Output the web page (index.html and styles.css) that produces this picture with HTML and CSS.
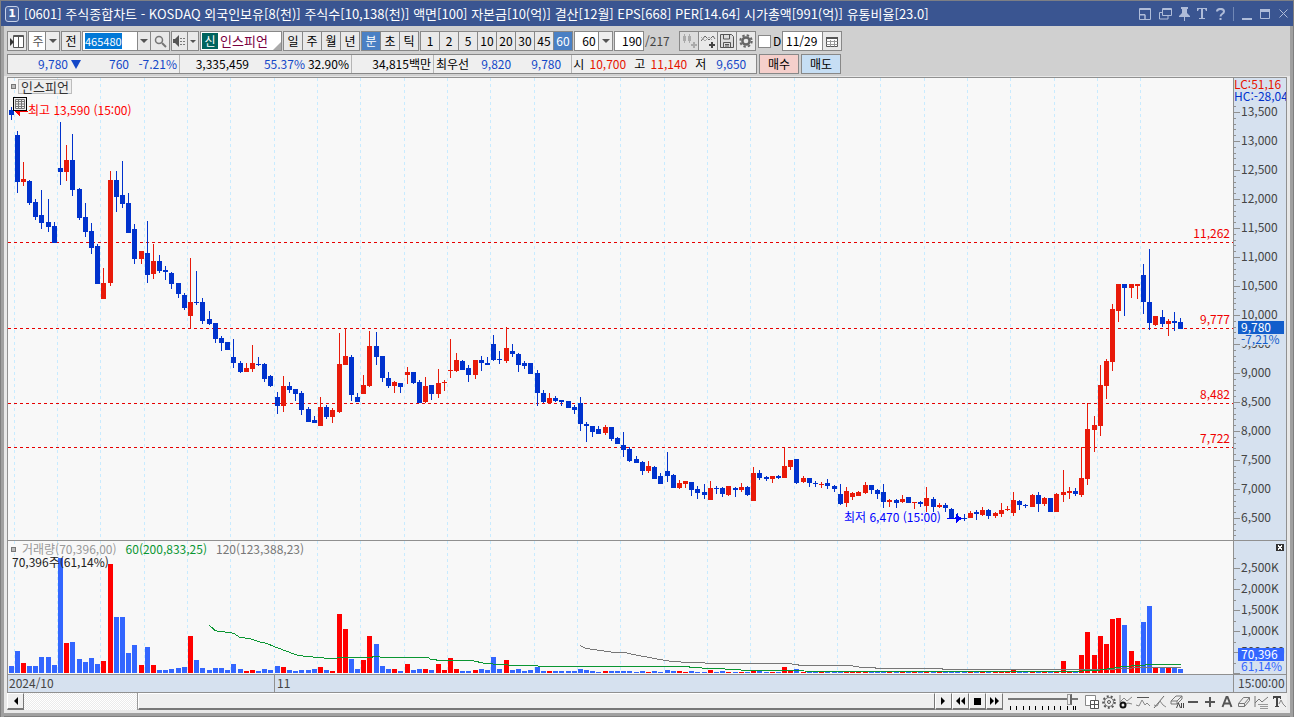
FILE: index.html
```html
<!DOCTYPE html>
<html lang="ko">
<head>
<meta charset="utf-8">
<title>[0601] 주식종합차트</title>
<link rel="stylesheet" href="styles.css">
</head>
<body>
<div class="window">
  <header class="titlebar">
    <span class="win-no">1</span>
    <h1 class="title">[0601] 주식종합차트 - KOSDAQ 외국인보유[8(천)] 주식수[10,138(천)] 액면[100] 자본금[10(억)] 결산[12월] EPS[668] PER[14.64] 시가총액[991(억)] 유통비율[23.0]</h1>
    <div class="win-tools">
      <button class="wt wide" aria-label="분할"><svg width="12" height="12"><path d="M.5 .5h11v11H.5zM0 1.500h12M1 6.500h5v5M6 11V7H1" fill="none" stroke="currentColor"/></svg></button>
      <button class="wt wide" aria-label="복제"><svg width="13" height="12"><path d="M3.500 .5h9v7h-9zM3 1.500h10M3 4.500H.5v6.500H9V8" fill="none" stroke="currentColor"/></svg></button>
      <button class="wt" aria-label="고정"><svg width="11" height="14"><path d="M2 0h7v2H8v4l3 3v1H6v4H5v-4H0V9l3-3V2H2z" fill="currentColor"/></svg></button>
      <button class="wt" aria-label="글꼴"><svg width="10" height="11"><path d="M0 0h10v3H9L8 1H6v9h2v1H2v-1h2V1H2L1 3H0z" fill="currentColor"/></svg></button>
      <button class="wt" aria-label="도움말"><svg width="9" height="12"><path d="M1 3.500C1 0 8 0 8 3.500C8 6 4.500 5.500 4.500 8.500M4.500 10v2" fill="none" stroke="currentColor" stroke-width="2"/></svg></button>
      <span class="wt-sep"></span>
      <button class="wt" aria-label="최소화"><svg width="10" height="12"><path d="M0 11h10" stroke="currentColor" stroke-width="2"/></svg></button>
      <button class="wt" aria-label="최대화"><svg width="10" height="10"><path d="M.5 .5h9v9h-9zM0 2h10" fill="none" stroke="currentColor"/><path d="M0 0h10v3H0z" fill="currentColor"/></svg></button>
      <button class="wt" aria-label="닫기"><svg width="9" height="9"><path d="M.5 .5l8 8M8.500 .5l-8 8" stroke="currentColor"/></svg></button>
    </div>
  </header>

  <div class="tools">
    <div class="row">
      <div class="grp"><button class="b w18" aria-label="목록"><svg width="14" height="13"><path d="M3.500 .5h10v12h-10z" fill="#fff" stroke="#555"/><path d="M3 1.500h11M8.500 2v10" stroke="#555"/><path d="M0 3l4 4-4 4z" fill="#333"/></svg></button></div>
      <div class="grp combo"><select class="sel kind" aria-label="종목구분"><option>주</option></select><span class="arr"><svg width="8" height="4"><path d="M0 0h8L4 4z"/></svg></span></div>
      <div class="grp"><button class="b w18">전</button></div>
      <div class="grp">
        <input class="code" id="code" aria-label="종목코드" value="465480">
        <button class="b w13" aria-label="최근 종목"><svg width="8" height="4"><path d="M0 0h8L4 4z" fill="#555"/></svg></button>
        <button class="b w18" aria-label="종목 검색"><svg width="13" height="13"><circle cx="5" cy="5" r="3.500" fill="none" stroke="#777" stroke-width="1.500"/><path d="M8 8l4 4" stroke="#777" stroke-width="2"/></svg></button>
      </div>
      <div class="grp">
        <button class="b w15" aria-label="음성"><svg width="13" height="12"><path d="M0 4h2l4-4v12L2 8H0z" fill="#555"/><path d="M8 3v1M8 6v1M8 9v1M11 3v1M11 6v1M11 9v1" stroke="#555" stroke-width="1.500"/></svg></button>
        <button class="b w10" aria-label="음성 설정"><svg width="6" height="3"><path d="M0 0h6L3 3z" fill="#555"/></svg></button>
      </div>
      <div class="grp stock"><span class="shin">신</span><span class="name">인스피언</span><svg class="corner" width="8" height="8"><path d="M8 0v8H0z" fill="#aaa"/></svg></div>
      <div class="grp"><button class="b w18">일</button><button class="b w18">주</button><button class="b w18">월</button><button class="b w18">년</button></div>
      <div class="grp"><button class="b w18 on">분</button><button class="b w18">초</button><button class="b w18">틱</button></div>
      <div class="grp"><button class="b w18">1</button><button class="b w18">2</button><button class="b w18">5</button><button class="b w18">10</button><button class="b w18">20</button><button class="b w18">30</button><button class="b w18">45</button><button class="b w18 on">60</button></div>
      <div class="grp combo"><select class="sel mins" aria-label="분 간격"><option>60</option></select><span class="arr"><svg width="8" height="4"><path d="M0 0h8L4 4z"/></svg></span></div>
      <div class="grp"><input class="count" aria-label="표시 봉 수" value="190"></div>
      <span class="total">/217</span>
      <div class="grp">
        <button class="b w18 off" aria-label="봉 추가"><svg width="15" height="14"><path d="M2.500 0v9M7.500 0v9" stroke="#aaa"/><path d="M1 2h3v5H1zM6 2h3v5H6z" fill="#aaa"/><path d="M9 11h6M12 8v6" stroke="#aaa" stroke-width="2"/></svg></button>
        <button class="b w18" aria-label="지표 추가"><svg width="15" height="14"><path d="M0 7l4-5 4 4 4-4 2 3" fill="none" stroke="#666"/><path d="M0 3l4 4 4-4 3 3" fill="none" stroke="#aaa"/><path d="M8 11h6M11 8v6" stroke="#444" stroke-width="2"/></svg></button>
        <button class="b w18" aria-label="저장"><svg width="14" height="14"><path d="M.5 .5h11l2 2v11H.5z" fill="#ddd" stroke="#555"/><path d="M3.500 1v4h6V1M3.500 13V8.500h7V13M5 10.500h4M5 12h4" fill="none" stroke="#555"/></svg></button>
        <button class="b w18" aria-label="설정"><svg width="14" height="14"><circle cx="7" cy="7" r="3.600" fill="none" stroke="#666" stroke-width="2.500"/><circle cx="7" cy="7" r="5.700" fill="none" stroke="#666" stroke-width="2" stroke-dasharray="2.400 2.077"/></svg></button>
      </div>
      <label class="dchk"><input type="checkbox">D</label>
      <div class="grp"><input class="date" aria-label="날짜" value="11/29"><button class="b w18" aria-label="달력"><svg width="12" height="11"><path d="M.5 1.500h11v9H.5z" fill="#fff" stroke="#555"/><path d="M0 2h12" stroke="#555" stroke-width="2"/><path d="M.5 5.500h11M.5 8.500h11M4.500 4v6.500M8.500 4v6.500" stroke="#999"/></svg></button></div>
    </div>
    <div class="row">
      <div class="quote">
        <div class="q"><span class="n w60 dn">9,780</span><svg class="tri" width="10" height="9"><path d="M0 0h10L5 9z" fill="#1448c8"/></svg><span class="n w48 dn">760</span><span class="n w48 dn">-7.21%</span></div>
        <div class="q"><span class="n w68 ">3,335,459</span><span class="n w56 dn">55.37%</span><span class="n w44">32.90%</span></div>
        <div class="q"><span class="n w78">34,815백만</span></div>
        <div class="q best"><span class="lab">최우선</span><span class="n w42 dn">9,820</span><span class="n w50 dn">9,780</span></div>
        <div class="q"><span>시</span><span class="n w42 up">10,700</span><span class="lab2">고</span><span class="n w42 up">11,140</span><span class="lab2">저</span><span class="n w40 dn">9,650</span></div>
      </div>
      <button class="order buy">매수</button>
      <button class="order sell">매도</button>
    </div>
  </div>

  <main class="chart">
    <section class="pane price">
      <svg class="plot" id="price" role="img" aria-label="인스피언 60분봉"></svg>
      <div class="tag"><i class="dot"></i><span class="tag-name">인스피언</span></div>
      <button class="grid-btn" aria-label="표 보기"><svg width="10" height="10"><path d="M.5 .5h9v9h-9zM.5 2.500h9M.5 5h9M.5 7.500h9M3.500 1v8M6.500 1v8" fill="none" stroke="#777"/></svg></button>
    </section>
    <svg class="axis" id="price-axis"></svg>
    <section class="pane volume">
      <svg class="plot" id="volume" role="img" aria-label="거래량"></svg>
      <div class="legend"><i class="dot"></i><span class="v0">거래량(70,396,00)</span><span class="v60">60(200,833,25)</span><span class="v120">120(123,388,23)</span></div>
      <div class="vnow">70,396주(61,14%)</div>
    </section>
    <div class="axis vol-axis"><svg class="plot" id="volume-axis"></svg><button class="pane-x" aria-label="닫기"><svg width="8" height="7"><path d="M2 1.500l4 4M6 1.500l-4 4" stroke="#fff"/></svg></button></div>
    <div class="dates"><span class="d1">2024/10</span><span class="d2">11</span></div>
    <div class="axis time">15:00:00</div>
  </main>

  <footer class="bottom">
    <div class="scroll">
      <button class="sb" aria-label="왼쪽"><svg width="5" height="8"><path d="M5 0v8L1 4z"/></svg></button>
      <div class="track"><div class="thumb"></div></div>
      <button class="sb" aria-label="오른쪽"><svg width="5" height="8"><path d="M0 0v8l4-4z"/></svg></button>
      <button class="sb" aria-label="뒤로"><svg width="9" height="8"><path d="M4 0v8L0 4zM9 0v8L5 4z"/></svg></button>
      <button class="sb" aria-label="정지"><svg width="7" height="7"><path d="M0 0h7v7H0z"/></svg></button>
      <button class="sb" aria-label="앞으로"><svg width="9" height="8"><path d="M0 0v8l4-4zM5 0v8l4-4z"/></svg></button>
    </div>
    <div class="speed"><input type="range" aria-label="속도" min="0" max="100" value="90"><svg width="70" height="4"><path d="M2.500 0v4M8.500 0v4M15.500 0v4M21.500 0v4M27.500 0v4M34.500 0v4M40.500 0v4M46.500 0v4M52.500 0v4M59.500 0v4M65.500 0v4M67.500 0v4" stroke="#000"/></svg></div>
    <div class="draw">
      <button class="di" aria-label="새 창"><svg width="14" height="14"><path d="M.5 .5h10v10h-10z" fill="#fff" stroke="#888"/><path d="M5.500 5.500h8v8h-8zM9.500 5.500v8M5.500 9.500h8" fill="#fff" stroke="#555"/></svg></button>
      <button class="di" aria-label="설정"><svg width="14" height="14"><circle cx="7" cy="7" r="4.500" fill="none" stroke="#777"/><circle cx="7" cy="7" r="5.800" fill="none" stroke="#555" stroke-width="2" stroke-dasharray="2 2.050"/><circle cx="7" cy="7" r="1.500" fill="none" stroke="#555"/></svg></button>
      <button class="di" aria-label="추세 설정"><svg width="14" height="14"><path d="M1 0v8M1 7l4-4 3 3 5-4M5 10l4-2 4 1" fill="none" stroke="#888"/><circle cx="4" cy="10" r="2.500" fill="none" stroke="#111" stroke-width="2"/></svg></button>
      <button class="di" aria-label="수평선"><svg width="14" height="14"><path d="M1 2.500h12" stroke="#555"/><path d="M0 10l3 1 3-6 3 5 2-2 3 3" fill="none" stroke="#888"/></svg></button>
      <button class="di" aria-label="추세선"><svg width="14" height="14"><path d="M1 13L11 1" stroke="#666"/><path d="M1 10l3 1 3-5 3 4 3 2" fill="none" stroke="#888"/></svg></button>
      <button class="di" aria-label="전체 지우기"><svg width="14" height="14"><path d="M1 9V6l5-5h6v3l-5 5z" fill="#eee" stroke="#777"/><path d="M1 6h6v3M7 6l5-5" fill="none" stroke="#777"/><path d="M6.500 13l2-5 2 5M11.500 8v5M13.500 8v5" fill="none" stroke="#444"/></svg></button>
      <button class="di" aria-label="축소"><svg width="14" height="14"><path d="M2 7h10" stroke="#555" stroke-width="2"/></svg></button>
      <button class="di" aria-label="확대"><svg width="14" height="14"><path d="M2 7h10M7 2v10" stroke="#555" stroke-width="2"/></svg></button>
      <button class="di" aria-label="글자"><svg width="14" height="14"><path d="M2.500 12L6.500 2h1l4 10M4 8.500h6" fill="none" stroke="#555" stroke-width="2"/></svg></button>
      <button class="di" aria-label="지우개"><svg width="14" height="14"><path d="M1.500 11.500v-3l5-6h6v3l-5 6zM1.500 8.500h6v3M7.500 8.500l5-6" fill="#eee" stroke="#777"/></svg></button>
      <button class="di" aria-label="차트 목록"><svg width="15" height="14"><path d="M1 1v11M1 8l4-4 3 3 6-5" fill="none" stroke="#777"/><path d="M4 9.500h10M6 11.500h8M6 13.500h8" stroke="#999"/></svg></button>
      <button class="di" aria-label="텍스트 표시"><svg width="14" height="14"><path d="M1 1h8v3H8V3H6v8h1v1H3v-1h1V3H2v1H1z" fill="#444"/><path d="M7 9l2-4 2 4 3 3" fill="none" stroke="#888"/></svg></button>
    </div>
  </footer>
</div>
<script src="chart.js"></script>
</body>
</html>
```
FILE: styles.css
```css
* { box-sizing: border-box; }
body {
  margin: 0;
  font: 12px/16px "Noto Sans CJK KR", "Liberation Sans", sans-serif;
  color: #000;
}
button, input, select { font: inherit; color: inherit; margin: 0; padding: 0; border: 0; border-radius: 0; }
svg { display: block; flex: none; }
.window {
  display: flex; flex-direction: column; height: 100vh;
  border-top: 1px solid #7d7f85; background: #e8e8e8;
  box-shadow: inset 1px 0 #7f7f7f, inset 4px 0 #a0a0a0, inset -1px 0 #7f7f7f, inset -4px 0 #a0a0a0, inset 0 -1px #7f7f7f, inset 0 -4px #a0a0a0;
  padding: 0 4px 7px;
  overflow: hidden;
}
.titlebar {
  display: flex; align-items: center; height: 25px; flex: none;
  margin: 0 -3px; padding: 0 1px 0 4px; background: #3a5591; color: #fff;
}
.win-no {
  width: 14px; height: 16px; border: 1px solid #c8d2e8; border-radius: 3px; background: #4b659e;
  font: bold 11px/14px "DejaVu Sans", sans-serif; text-align: center;
}
.title { margin: 0 0 0 5px; font-size: 13px; line-height: 16px; font-weight: 400; white-space: pre; flex: 1; overflow: hidden; }
.win-tools { display: flex; align-items: center; color: #afbcd9; }
.wt { display: flex; align-items: center; justify-content: center; width: 18px; height: 18px; background: none; }
.wt.wide { width: 20px; }
.wt-sep { width: 1px; height: 14px; margin: 0 4px; background: #7188b6; }

.tools { display: flex; flex-direction: column; gap: 3px; flex: none; background: #d0d0d0; padding: 5px 3px 2px; border-bottom: 1px solid #e6e6e6; }
.row { display: flex; gap: 1px; height: 20px; align-items: stretch; }
.grp { display: flex; border: 1px solid #888; background: #fff; position: relative; }
.grp > * + .b { border-left: 1px solid #888; box-sizing: content-box; }
.b { display: flex; align-items: center; justify-content: center; background: #e9e9e9; line-height: 16px; }
.w18 { width: 18px; } .w15 { width: 15px; } .w13 { width: 12px; } .w10 { width: 10px; }
.b.on { background: #4a80c4; color: #fff; }
.b.off { background: #dcdcdc; }
.sel { appearance: none; background: #fff; padding-right: 14px; text-align: center; }
.kind { width: 30px; padding-left: 2px; color: #555; }
.mins { width: 37px; padding-left: 5px; }
.arr {
  position: absolute; right: 0; top: 0; bottom: 0; width: 14px; pointer-events: none;
  display: flex; align-items: center; justify-content: center; border-left: 1px solid #888; background: #eee; fill: #555;
}
.code { width: 54px; padding-left: 2px; font-size: 11px; background: #fff; outline: 0; }
.code::selection { background: #0078d7; color: #fff; }
.stock { width: 82px; align-items: center; }
.shin { width: 16px; line-height: 16px; margin-left: 1px; background: #00645e; color: #fff; text-align: center; }
.name { margin-left: 2px; color: #7a0040; font-size: 13px; }
.corner { position: absolute; right: 0; bottom: 0; }
.count { width: 28px; padding-right: 1px; text-align: right; }
.total { width: 33px; line-height: 20px; color: #444; }
.dchk { display: flex; align-items: center; gap: 2px; width: 24px; padding-left: 1px; white-space: nowrap; }
.dchk input { appearance: none; width: 13px; height: 13px; border: 1px solid #888; background: #fff; flex: none; }
.date { width: 39px; padding-left: 3px; }

.quote { display: flex; border: 1px solid #888; background: #efefef; width: 750px; line-height: 18px; white-space: nowrap; }
.q { display: flex; align-items: center; padding-right: 2px; }
.q + .q { border-left: 1px solid #b5b5b5; padding-left: 1px; }
.n { text-align: right; }
.w60 { width: 60px; } .w48 { width: 48px; } .w68 { width: 68px; } .w56 { width: 56px; } .w44 { width: 44px; }
.w40 { width: 40px; } .w78 { width: 78px; } .w42 { width: 42px; } .w50 { width: 50px; }
.q.best { padding-right: 10px; }
.tri { margin-left: 3px; }
.lab { margin-left: 1px; }
.lab2 { margin-left: 8px; }
.dn { color: #1448c8; }
.up { color: #e61400; }
.order { width: 40px; border: 1px solid #888; margin-left: 1px; }
.buy { background: #f5cfcb; }
.sell { background: #c6def4; }

.chart {
  flex: 1; min-height: 0; margin: 0 3px;
  display: grid; grid-template-columns: 1fr 53px; grid-template-rows: 1fr 134px 18px;
  border: 1px solid #909090; background: #f8f8f8;
}
.pane { position: relative; min-width: 0; min-height: 0; overflow: hidden; }
.plot { width: 100%; height: 100%; position: absolute; inset: 0; shape-rendering: crispEdges; }
.plot text, .axis text { font-size: 12px; }
.volume, .vol-axis { border-top: 1px solid #909090; }
.axis { width: 100%; height: 100%; background: #d6e1ef; border-left: 1px solid #909090; position: relative; overflow: hidden; shape-rendering: crispEdges; }
.tag { position: absolute; left: 3px; top: 1px; display: flex; align-items: center; gap: 2px; }
.dot { width: 5px; height: 5px; border: 1px solid #777; background: #bbb; flex: none; }
.tag-name { width: 54px; height: 15px; line-height: 13px; border: 1px solid #bdbdbd; background: #eee; color: #333; text-align: center; font-size: 13px; }
.grid-btn { position: absolute; left: 5px; top: 19px; width: 14px; height: 14px; border: 1px solid #000; background: #eee; padding: 1px; }
.legend { position: absolute; left: 3px; top: 0; display: flex; align-items: center; gap: 9px; white-space: nowrap; }
.legend .v0 { margin-left: -3px; color: #999; }
.v60 { color: #0a9632; } .v120 { color: #777; }
.vnow { position: absolute; left: 4px; top: 13px; color: #222; }
.pane-x { position: absolute; right: 2px; top: 3px; background: #333; }
.dates, .time { border-top: 1px solid #909090; background: #d6e1ef; color: #444; line-height: 15px; }
.dates { display: flex; }
.d1 { width: 266px; padding-left: 1px; }
.d2 { border-left: 1px solid #909090; padding-left: 2px; }
.time { padding-left: 4px; white-space: nowrap; }

.bottom { display: flex; flex: none; height: 17px; margin: 0 3px; background: #efefef; }
.scroll { flex: 1; display: flex; min-width: 0; }
.sb {
  width: 17px; flex: none; display: flex; align-items: center; justify-content: center; background: #efefef;
  border: 1px solid #fff; border-right-color: #777; border-bottom: 2px solid #777;
}
.track { flex: 1; display: flex; background: repeating-conic-gradient(#fff 0 25%, #ebebeb 0 50%) 0 0 / 2px 2px; }
.thumb { margin-left: 12.5%; flex: 1; background: #efefef; border: 1px solid #fff; border-right-color: #777; border-bottom: 2px solid #777; box-shadow: -1px 0 #999; }
.speed { width: 77px; padding: 0 2px 0 5px; display: flex; flex-direction: column; }
.speed input { appearance: none; width: 70px; height: 13px; background: linear-gradient(#777, #777) 0 5px / 100% 2px no-repeat; }
.speed input::-webkit-slider-thumb { appearance: none; width: 5px; height: 11px; background: #eee; border: 1px solid #999; border-right: 2px solid #666; }
.draw { display: flex; align-items: center; justify-content: space-between; width: 207px; padding: 0 1px 0 5px; }
.di { background: none; }
```
FILE: chart.js
```js
// Each bar: direction, high, low, body top, body bottom (screen rows).
const BARS = `b107,120,110,115 b131,193,135,182 r162,186,179,182 b180,205,181,203 b199,220,202,217 b190,229,215,223 b199,232,222,227 b222,243,226,243 b122,185,168,172 r145,181,160,172
b134,196,160,190 b188,220,189,218 b203,237,217,232 b223,254,231,248 b244,284,246,284 r268,299,283,299 r171,286,180,283 b171,212,180,197 b161,208,195,204 b193,233,203,233
b224,264,229,259 r251,264,251,259 b221,283,253,275 r244,279,261,274 b255,273,261,271 b266,280,270,272 b272,289,273,284 b283,298,283,294 b293,310,295,308 r258,328,302,316
b271,305,302,303 b298,324,302,321 b311,325,319,324 b323,343,323,339 b336,351,338,343 b342,350,342,350 b339,368,357,363 b361,373,363,372 r363,372,368,372 r345,372,363,369
b357,366,364,365 b363,382,364,379 b375,387,376,386 b392,414,397,406 r376,412,386,406 b382,393,386,390 b389,401,389,394 b391,415,393,410 b407,422,409,422 b416,423,420,423
r397,426,407,426 b405,419,407,417 r408,423,410,417 r333,413,364,412 r328,365,356,365 b355,401,357,395 b393,402,397,402 r375,394,385,394 r331,387,346,386 b332,365,346,357
b356,382,356,378 b372,388,378,386 r381,393,382,386 b383,393,383,387 r367,384,372,375 b372,384,372,383 b380,403,382,403 r377,403,386,402 b385,400,385,394 r369,398,383,394
r380,391,382,383 r339,378,370,371 r353,372,360,371 b360,370,361,370 b365,382,368,375 r360,379,360,375 b356,371,360,363 b357,365,363,365 b335,361,344,360 b351,364,359,360
r327,363,348,361 b344,357,351,354 b353,372,354,365 b361,369,363,366 b363,374,363,374 b370,406,373,393 b390,403,393,402 r393,403,398,403 b396,402,398,401 b400,406,400,402
b401,408,401,408 b405,414,407,410 b397,431,403,424 b422,442,424,426 b426,437,426,432 b426,434,429,434 r425,435,427,433 b427,441,427,439 b437,444,438,444 b432,457,445,450
b447,462,449,461 b456,463,459,463 b461,475,462,471 r461,473,466,471 b466,479,467,479 b473,484,476,484 b452,482,471,476 b474,488,475,488 r480,489,483,488 r481,488,481,484
b482,496,482,490 b486,499,489,493 b484,499,492,495 r481,500,488,500 b486,494,488,489 b487,497,488,494 r486,496,486,495 b487,497,488,490 r483,492,487,490 b486,496,487,495
r467,501,473,501 b470,480,473,478 b476,481,477,479 r476,483,476,479 b475,479,476,478 r448,478,466,478 r460,470,460,467 b459,484,459,483 r476,483,478,482 b478,487,478,483
b481,487,483,484 r482,488,484,485 b479,489,483,486 b485,492,486,489 b484,505,494,504 r487,507,491,503 r492,500,493,497 r491,496,492,496 r482,494,485,493 b485,494,485,490
b489,499,490,494 b484,508,492,502 r499,507,500,502 b499,508,500,503 r495,503,499,502 b497,503,497,503 r502,509,502,503 b501,507,502,504 r487,512,498,506 b497,512,499,507
r503,508,505,507 b503,512,505,508 b508,518,509,518 b513,520,517,519 b514,521,518,519 r511,518,513,518 b510,520,512,514 r507,516,510,515 b509,519,510,516 r512,518,513,516
r503,517,510,514 r506,511,509,510 r492,516,500,513 b500,510,501,505 b504,508,505,506 r494,507,495,507 b492,512,495,504 r497,506,498,504 b498,512,498,512 r493,512,494,512
r470,502,492,495 r487,499,491,493 b488,496,491,494 r447,497,478,495 r403,485,429,479 r416,452,425,430 r365,436,385,426 r359,399,361,386 r304,371,309,362 r284,322,284,311
b284,316,284,288 r284,298,284,288 r284,299,284,286 b264,314,275,302 b249,330,302,323 r316,326,316,325 b310,327,317,324 r319,336,321,324 b312,331,321,323 b318,329,322,329`
  .split(/\s+/).map(s => [s[0], ...s.slice(1).split(',').map(Number)]);

const VOLUME = [7,22,10,7,7,16,16,8,115,30,31,14,11,15,9,12,109,56,56,20,28,8,26,8,3,3,4,5,6,37,13,5,3,5,5,3,9,4,2,3,2,4,3,7,6,3,2,3,3,4,
  6,3,2,59,44,14,4,13,37,29,7,4,4,2,9,3,4,4,3,9,3,15,4,2,2,3,4,3,16,4,13,3,4,2,3,6,2,2,2,2,2,2,4,3,2,1,2,2,2,2,
  2,1,2,1,2,1,3,2,2,1,2,1,1,3,1,2,1,1,1,1,2,2,1,1,1,6,2,4,1,2,1,1,2,2,2,2,1,1,1,1,1,1,1,1,1,1,1,1,1,1,
  1,1,1,1,1,1,1,1,1,1,1,1,3,1,1,1,1,1,1,1,12,1,1,18,41,18,37,29,54,55,48,22,12,51,67,5,5,5,5,4];

const MA60 = '209,625 212,627 215,630 219,631 230,632 234,633 240,637 250,638 258,641 267,643 274,646 282,649 290,652 298,655 308,656 318,657 330,658 345,657 370,657 375,656 385,657 428,657 431,659 442,660 472,660 485,663 500,664 516,665 559,666 689,666 690,667 714,668 735,669 746,670 860,671 1080,671 1084,670 1096,670 1111,668 1123,666 1140,665 1150,664 1181,664';
const MA120 = '580,645 586,648 600,650 615,652 625,652 633,654 644,656 660,659 672,661 690,662 719,663 788,663 802,665 850,665 862,667 875,667 875,668 942,668 943,669 1108,669 1125,668 1140,667 1181,667';

const LEFT = 8, TOP = 78, VTOP = 541, PITCH = 43.3333;
const barX = i => Math.floor(11.05 + i * 6.1885) - LEFT;
const rect = (x, y, w, h, fill) => `<rect x="${x}" y="${y}" width="${w}" height="${h}" fill="${fill}"/>`;
const text = (x, y, fill, s, extra = '') => `<text x="${x}" y="${y}" fill="${fill}" ${extra}>${s}</text>`;
const put = (id, html) => { document.getElementById(id).innerHTML = html; };
const shift = (pts, dy) => pts.split(' ').map(p => p.split(',').map(Number)).map(([x, y]) => `${x - LEFT},${y - dy + 0.5}`).join(' ');

let grid = '';
for (let k = 0; k < 27; k++) {
  const x = Math.floor(14.3 + k * PITCH) - LEFT + 0.5;
  grid += `<line x1="${x}" x2="${x}" y1="0" y2="100%" stroke="#c8ebff" stroke-dasharray="3 3"/>`;
}

let price = grid, levels = '';
for (const [y, label] of [[242, '11,262'], [328, '9,777'], [403, '8,482'], [447, '7,722']]) {
  price += `<line x1="0" x2="100%" y1="${y - TOP + 0.5}" y2="${y - TOP + 0.5}" stroke="#e60000" stroke-dasharray="3 3"/>`;
  levels += `<svg x="100%" overflow="visible">${text(-3, y - TOP - 4, '#f00000', label, 'text-anchor="end"')}</svg>`;
}
BARS.forEach(([d, h, l, t, b], i) => {
  const x = barX(i), c = d === 'r' ? '#e81a0a' : '#0032cd';
  price += rect(x, h - TOP, 1, l - h, c) + rect(x - 2, t - TOP, 5, Math.max(1, b - t), c);
});
price += levels
  + '<path d="M6 33h14v1h-8v5l-6-6z" fill="#f00"/>' + text(20, 37, '#f00', '최고 13,590 (15:00)')
  + '<path d="M939 440h9v-4l6 4.500-6 4.500v-4h-9z" fill="#00f"/>' + text(836, 444, '#00f', '최저 6,470 (15:00)');
put('price', price);

let volume = grid;
VOLUME.forEach((v, i) => {
  volume += rect(barX(i) - 2, 132 - v, 5, v, BARS[i][0] === 'r' ? '#f00' : '#3366ff');
});
volume += `<polyline points="${shift(MA120, VTOP)}" fill="none" stroke="#777"/><polyline points="${shift(MA60, VTOP)}" fill="none" stroke="#0a9632"/>`;
put('volume', volume);

let axis = '';
for (let k = -1; k < 75; k++) {
  const y = Math.round(112 - TOP + k * 5.8);
  axis += rect(0, y, k % 5 ? 2 : 6, 1, '#909090');
}
for (let k = 0; k < 15; k++) {
  axis += text(7, 112 - TOP + k * 29 + 4, '#444', (13500 - k * 500).toLocaleString('en-US'));
}
axis += rect(6, 256, 46, 11, '#d6e1ef')
  + text(0, 11, '#e61400', 'LC:51,16') + text(0, 23, '#0032cd', 'HC:-28,04')
  + rect(4, 243, 46, 13, '#135ecb') + text(7, 254, '#fff', '9,780') + text(7, 266, '#135ecb', '-7,21%');
put('price-axis', axis);

let vaxis = '';
['2,500K', '2,000K', '1,500K', '1,000K', '500,000', ''].forEach((s, k) => {
  const y = Math.round(27 + k * 20.9);
  vaxis += rect(0, y, 6, 1, '#909090') + rect(0, y - 10, 2, 1, '#909090') + text(7, y + 4, '#444', s);
});
vaxis += rect(7, 120, 45, 11, '#d6e1ef') + rect(4, 107, 46, 13, '#3366ff') + text(7, 118, '#fff', '70,396') + text(7, 130, '#3366ff', '61,14%');
put('volume-axis', vaxis);

const code = document.getElementById('code');
code.focus();
code.select();
```
